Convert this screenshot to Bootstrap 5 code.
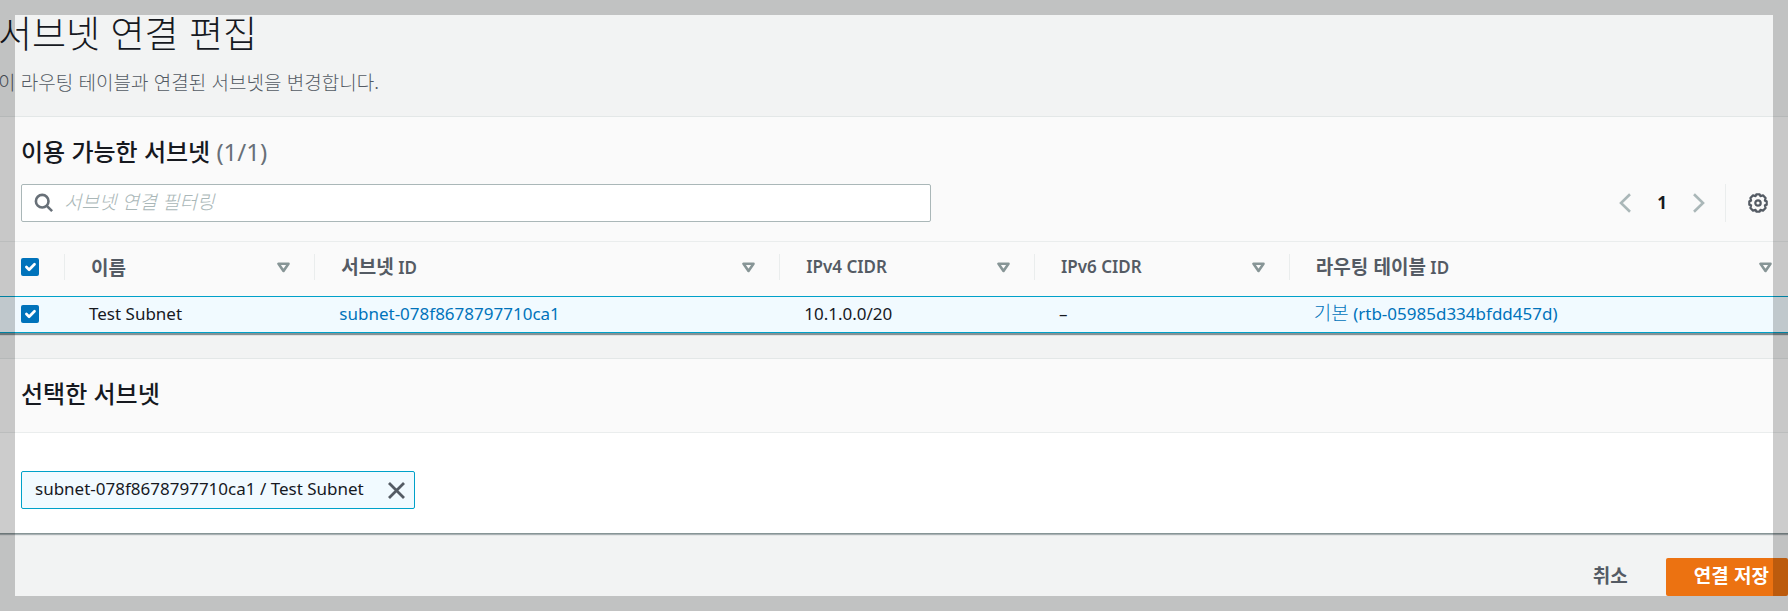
<!DOCTYPE html>
<html lang="ko">
<head>
<meta charset="utf-8">
<meta name="viewport" content="width=device-width, initial-scale=1">
<title>서브넷 연결 편집</title>
<link href="https://cdn.jsdelivr.net/npm/bootstrap@5.3.0/dist/css/bootstrap.min.css" rel="stylesheet">
<script src="https://cdn.jsdelivr.net/npm/bootstrap@5.3.0/dist/js/bootstrap.bundle.min.js" defer></script>
<style>
  body { background: #f2f3f3; color: #16191f; font-family: "Noto Sans", "Noto Sans CJK KR", sans-serif; font-size: 17px; line-height: 24px; overflow: hidden; }
  .hangul { font-family: "Noto Sans CJK KR", sans-serif; font-size: 19px; }
  /* translucent frame over the window edge */
  .window-frame { position: fixed; inset: 0; border: 15px solid rgba(0, 0, 0, .2); pointer-events: none; z-index: 10; }
  .page-title { font-family: "Noto Sans CJK KR", sans-serif; font-size: 37px; font-weight: 300; line-height: 44px; }
  .page-head { padding: 10px 0 20px; margin-left: -2px; }
  .page-desc { color: #545b64; font-weight: 300; line-height: 28px; margin-top: 14px; }
  .panel { border-top: 1px solid #e3e7e7; border-bottom: 1px solid #879596; box-shadow: 0 1px 1px rgba(0, 28, 36, .3); background: #fff; }
  .panel-table { border-bottom: 0; box-shadow: 0 2px 1px rgba(0, 28, 36, .45); }
  .panel-head { background: #fafafa; padding: 19px 21px; }
  .panel-title { font-size: 24px; font-weight: 500; line-height: 32px; }
  .panel-selected { margin-top: 25px; }
  .panel-selected .panel-head { padding: 19px 21px 22px; border-bottom: 1px solid #eaeded; }
  .counter { color: #687078; font-family: "Noto Sans", sans-serif; font-weight: 400; }
  .search-box { width: 52.1%; height: 38px; background: #fff; border: 1px solid #aab7b8; border-radius: 2px; padding: 0 12px; }
  .search-box input { border: 0; outline: 0; background: none; padding: 0 0 4px 2px; }
  .search-box input::placeholder { color: #aab7b8; font-style: italic; font-weight: 300; opacity: 1; }
  .plain-btn { border: 0; background: none; padding: 0; line-height: 0; }
  .page-number { font-weight: 700; margin: 0 26px; }
  .prefs { border-left: 1px solid #eaeded; height: 38px; padding-left: 22px; margin-left: 20px; margin-right: -1px; }
  .subnets { table-layout: fixed; width: 100%; }
  .subnets thead { background: #fafafa; color: #545b64; border-top: 1px solid #eaeded; }
  .subnets th { height: 55px; font-weight: 600; padding: 0 0 4px; }
  .subnets th > div { height: 26px; border-left: 1px solid #eaeded; padding: 0 24px 0 26px; }
  .subnets th:first-child, .subnets td:first-child { padding-left: 21px; }
  .subnets td { height: 36px; padding: 0 0 2px 25px; background: #f1faff; }
  .subnets tbody tr { border-top: 1px solid #00a1c9; border-bottom: 1px solid #00a1c9; }
  .subnets td .hangul { line-height: 20px; }
  .subnets a { color: #0073bb; text-decoration: none; }
  .col-check { width: 64px; } .col-name { width: 14%; } .col-subnet { width: 26%; } .col-cidr { width: 14.25%; }
  .subnets .form-check-input { width: 18px; height: 18px; margin: 0; border-radius: 2px; border: 0; display: block; }
  .form-check-input:checked { background-color: #0073bb; }
  .selected-body { padding: 38px 21px 24px; }
  .token { height: 38px; border: 1px solid #00a1c9; border-radius: 2px; background: #f1faff; padding: 0 9px 0 13px; gap: 24px; }
  .token > span { padding-bottom: 2px; }
  .actions { padding-top: 24px; }
  .action-btn { font-weight: 700; height: 38px; border: 0; border-radius: 2px; line-height: 34px; padding: 0 0 4px; }
  .cancel { color: #545b64; background: none; margin-right: 38px; }
  .save { color: #fff; background: #ec7211; padding-left: 28px; padding-right: 19px; }
</style>
</head>
<body>
<main>
  <header class="page-head">
    <h1 class="page-title mb-0">서브넷 연결 편집</h1>
    <p class="page-desc hangul mb-0">이 라우팅 테이블과 연결된 서브넷을 변경합니다.</p>
  </header>

  <section class="panel panel-table">
    <div class="panel-head">
      <h2 class="panel-title mb-3">이용 가능한 서브넷 <span class="counter">(1/1)</span></h2>
      <div class="d-flex align-items-center justify-content-between">
        <label class="search-box d-flex align-items-center">
          <svg width="20" height="20" viewBox="0 0 20 20" fill="none" stroke="#687078" stroke-width="2.6" aria-label="검색"><circle cx="8.2" cy="8.2" r="6.3"/><path d="M12.8 12.8l5.3 5.3"/></svg>
          <input class="hangul flex-grow-1 ms-2" type="text" placeholder="서브넷 연결 필터링">
        </label>
        <div class="d-flex align-items-center">
          <button class="plain-btn" aria-label="이전"><svg width="12" height="20" viewBox="0 0 12 20" fill="none" stroke="#aab7b8" stroke-width="2.6"><path d="M11 1.2L2 10l9 8.8"/></svg></button>
          <span class="page-number">1</span>
          <button class="plain-btn" aria-label="다음"><svg width="12" height="20" viewBox="0 0 12 20" fill="none" stroke="#aab7b8" stroke-width="2.6"><path d="M1 1.2l9 8.8-9 8.8"/></svg></button>
          <div class="prefs d-flex align-items-center">
            <button class="plain-btn" aria-label="기본 설정"><svg width="20" height="20" viewBox="0 0 20 20" fill="none" stroke="#545b64" stroke-width="2.2" stroke-linejoin="round"><path d="M8.3 1.3h3.4l.7 1.8 2.6-.7 2.6 2.6-.7 2.6 1.8.7v3.4l-1.8.7.7 2.6-2.6 2.6-2.6-.7-.7 1.8H8.3l-.7-1.8-2.6.7L2.4 15l.7-2.6-1.8-.7V8.3l1.8-.7L2.4 5 5 2.4l2.6.7z"/><circle cx="10" cy="10" r="2.7"/></svg></button>
          </div>
        </div>
      </div>
    </div>
    <table class="subnets">
      <colgroup><col class="col-check"><col class="col-name"><col class="col-subnet"><col class="col-cidr"><col class="col-cidr"><col></colgroup>
      <thead>
        <tr>
          <th><input class="form-check-input" type="checkbox" checked aria-label="모두 선택"></th>
          <th><div class="d-flex align-items-center justify-content-between"><span class="hangul">이름</span><svg width="13" height="11" viewBox="0 0 13 11" fill="none" stroke="#879596" stroke-width="2.6" stroke-linejoin="round"><path d="M1.5 1.7h10L6.5 9z"/></svg></div></th>
          <th><div class="d-flex align-items-center justify-content-between"><span><span class="hangul">서브넷</span> ID</span><svg width="13" height="11" viewBox="0 0 13 11" fill="none" stroke="#879596" stroke-width="2.6" stroke-linejoin="round"><path d="M1.5 1.7h10L6.5 9z"/></svg></div></th>
          <th><div class="d-flex align-items-center justify-content-between"><span>IPv4 CIDR</span><svg width="13" height="11" viewBox="0 0 13 11" fill="none" stroke="#879596" stroke-width="2.6" stroke-linejoin="round"><path d="M1.5 1.7h10L6.5 9z"/></svg></div></th>
          <th><div class="d-flex align-items-center justify-content-between"><span>IPv6 CIDR</span><svg width="13" height="11" viewBox="0 0 13 11" fill="none" stroke="#879596" stroke-width="2.6" stroke-linejoin="round"><path d="M1.5 1.7h10L6.5 9z"/></svg></div></th>
          <th><div class="d-flex align-items-center justify-content-between pe-3"><span><span class="hangul">라우팅 테이블</span> ID</span><svg width="13" height="11" viewBox="0 0 13 11" fill="none" stroke="#879596" stroke-width="2.6" stroke-linejoin="round"><path d="M1.5 1.7h10L6.5 9z"/></svg></div></th>
        </tr>
      </thead>
      <tbody>
        <tr>
          <td><input class="form-check-input" type="checkbox" checked aria-label="Test Subnet 선택"></td>
          <td>Test Subnet</td>
          <td><a href="#">subnet-078f8678797710ca1</a></td>
          <td>10.1.0.0/20</td>
          <td>–</td>
          <td><a href="#"><span class="hangul fw-light">기본</span> (rtb-05985d334bfdd457d)</a></td>
        </tr>
      </tbody>
    </table>
  </section>

  <section class="panel panel-selected">
    <div class="panel-head">
      <h2 class="panel-title mb-0">선택한 서브넷</h2>
    </div>
    <div class="selected-body d-flex">
      <div class="token d-flex align-items-center">
        <span>subnet-078f8678797710ca1 / Test Subnet</span>
        <button class="plain-btn" aria-label="제거"><svg width="17" height="17" viewBox="0 0 17 17" fill="none" stroke="#545b64" stroke-width="2.8"><path d="M1 1l15 15M16 1L1 16"/></svg></button>
      </div>
    </div>
  </section>

  <footer class="actions d-flex justify-content-end">
    <button class="action-btn cancel hangul">취소</button>
    <button class="action-btn save hangul">연결 저장</button>
  </footer>
</main>
<div class="window-frame"></div>
</body>
</html>
